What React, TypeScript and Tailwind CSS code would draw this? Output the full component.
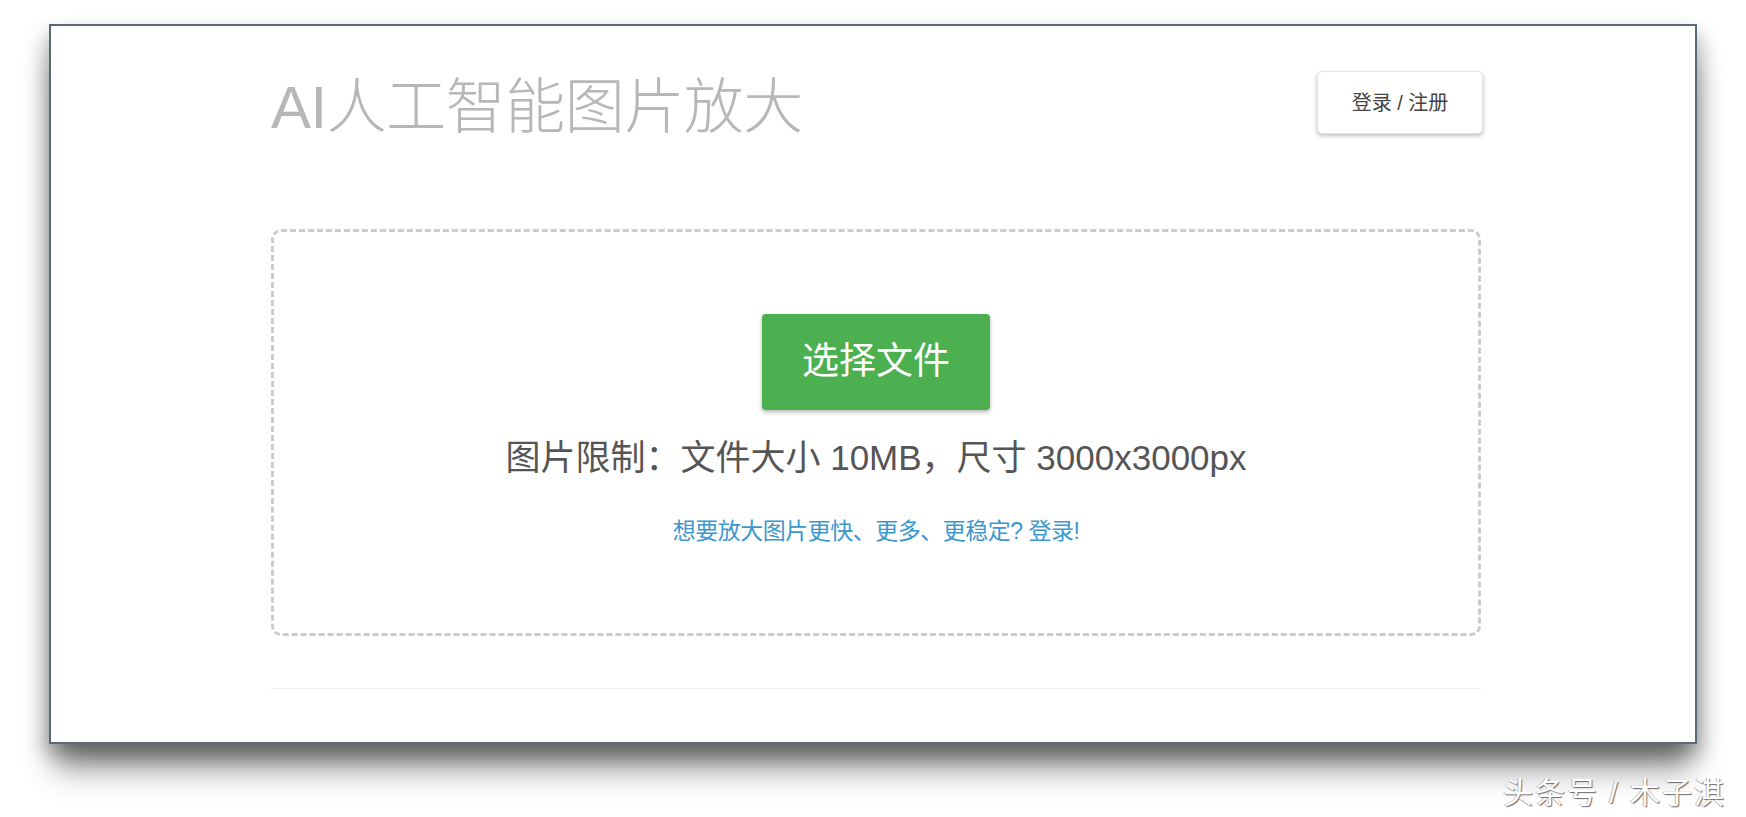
import React from "react";

export default function App() {
  const font = {
    fontFamily:
      '"Liberation Sans", "Noto Sans CJK SC", "Noto Sans", sans-serif',
  };
  return (
    <div className="w-[1746px] h-[817px] bg-white overflow-hidden" style={font}>
      <div className="pt-[24px] px-[49px]">
        <div className="h-[720px] border-2 border-[#566a76] bg-white shadow-[0_30px_30px_-6px_rgba(0,0,0,0.45),-6px_10px_18px_rgba(0,0,0,0.18),6px_10px_18px_rgba(0,0,0,0.18)]">
          <div className="w-[1210px] mx-auto translate-x-[3px]">
            <div className="flex items-center justify-between pt-[45px] h-[110px]">
              <h1 className="text-[60px] leading-none text-[#b7b7b7] font-light tracking-[-0.5px] mt-[8px]">
                AI人工智能图片放大
              </h1>
              <button className="w-[166px] h-[63px] rounded-[5px] bg-white text-[#444] text-[20px] shadow-[0_2px_4px_rgba(0,0,0,0.25)] border border-[#e4e4e4] mr-[-2px] mt-[-2px]">
                登录 / 注册
              </button>
            </div>
            <div className="mt-[93px] h-[407px] border-[3px] border-dashed border-[#cccccc] rounded-[10px] flex flex-col items-center">
              <button className="mt-[82px] w-[228px] h-[96px] rounded-[4px] bg-[#4caf50] text-white text-[37px] shadow-[0_2px_4px_rgba(0,0,0,0.3)]">
                选择文件
              </button>
              <p className="mt-[30px] text-[35px] text-[#555] leading-none">
                图片限制：文件大小 10MB，尺寸 3000x3000px
              </p>
              <p className="mt-[45px] text-[23px] text-[#3c97cc] leading-none tracking-[-0.5px]">
                想要放大图片更快、更多、更稳定? 登录!
              </p>
            </div>
            <div className="mt-[52px] h-px bg-[#eeeeee]" />
          </div>
        </div>
      </div>
      <div className="flex justify-end pr-[20px] mt-[26px]">
        <span className="text-[30px] tracking-[2px] text-white [text-shadow:1px_1px_1px_#6b6b6b,-1px_0_0_#bbb]">
          头条号 / 木子淇
        </span>
      </div>
    </div>
  );
}
